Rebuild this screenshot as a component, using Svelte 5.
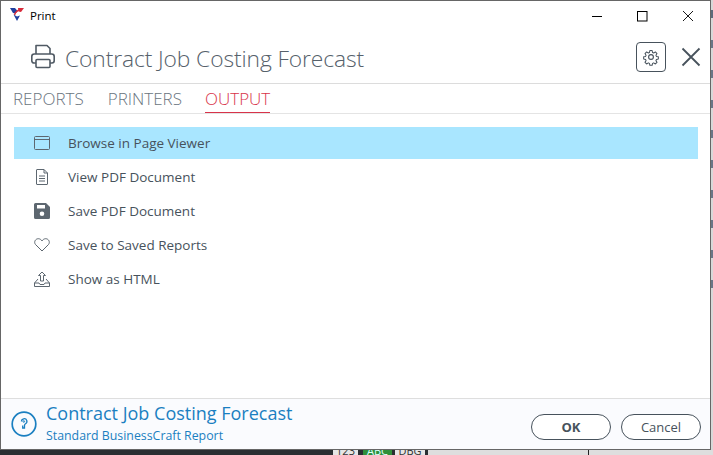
<script>
  const items = ['Browse in Page Viewer','View PDF Document','Save PDF Document','Save to Saved Reports','Show as HTML'];
  const tabs = ['REPORTS','PRINTERS','OUTPUT'];
</script>

<div class="screen">
  <div class="top-row">
    <main class="window">
      <div class="titlebar">
        <svg class="logo" width="14" height="13" viewBox="0 0 14 13">
          <path d="M0 0h5l2.500 3-2 2.500L3 5z" fill="#1f3f9f"/>
          <path d="M8 0h6l-3 4-2.500-.5z" fill="#d82a3a"/>
          <path d="M4.500 7C5.500 3.500 8 2 11 1.500" fill="none" stroke="#d82a3a" stroke-width="1.400"/>
          <path d="M3.500 6.500L7 13l3-5.500-3 1z" fill="#1f3f9f"/>
        </svg>
        <span class="wintitle">Print</span>
        <div class="winbtns">
          <svg width="12" height="12" viewBox="0 0 12 12"><path d="M0 6.500h10" stroke="#000" fill="none"/></svg>
          <svg width="12" height="12" viewBox="0 0 12 12"><rect x=".5" y="1.500" width="9.500" height="9.500" stroke="#000" fill="none"/></svg>
          <svg width="12" height="12" viewBox="0 0 12 12"><path d="M1 1l10 10M11 1L1 11" stroke="#000" fill="none" stroke-width=".9"/></svg>
        </div>
      </div>

      <header class="head">
        <svg class="printer" width="24" height="25" viewBox="0 0 24 25" fill="none" stroke="#505a64" stroke-width="1.600" stroke-linejoin="round">
          <path d="M5 10V1.500h11l3 3V10"/>
          <path d="M5 19H3a2.200 2.200 0 0 1-2.200-2.200v-4.300A2.500 2.500 0 0 1 3.300 10h17.400a2.500 2.500 0 0 1 2.500 2.500v4.300A2.200 2.200 0 0 1 21 19h-2"/>
          <rect x="5" y="15.500" width="14" height="8" rx="1"/>
        </svg>
        <h1>Contract Job Costing Forecast</h1>
        <button class="gear" aria-label="Settings">
          <svg width="18" height="18" viewBox="0 0 24 24" fill="none" stroke="#47525c" stroke-width="1.500" stroke-linejoin="round">
            <circle cx="12" cy="12" r="3.200"/>
            <path d="M10.300 2.500h3.400l.6 2.900 1.700.7 2.500-1.600 2.400 2.400-1.600 2.500.7 1.700 2.900.6v3.400l-2.900.6-.7 1.700 1.600 2.500-2.400 2.400-2.500-1.600-1.700.7-.6 2.900h-3.400l-.6-2.900-1.700-.7-2.500 1.600-2.400-2.400 1.600-2.500-.7-1.700-2.900-.6v-3.400l2.900-.6.7-1.700-1.600-2.500 2.400-2.400 2.500 1.600 1.700-.7z" transform="translate(1.200 1.200) scale(.9)"/>
          </svg>
        </button>
        <svg class="closex" width="20" height="20" viewBox="0 0 20 20"><path d="M1.500 1.500l17 17M18.500 1.500l-17 17" stroke="#47525c" stroke-width="1.800" fill="none"/></svg>
      </header>

      <nav class="tabs">
        {#each tabs as t, i}
          <span class="tab" class:active={i === 2}>{t}</span>
        {/each}
      </nav>

      <ul class="list">
        {#each items as it, i}
          <li class:sel={i === 0}>
            <span class="ico">
              {#if i === 0}
                <svg width="16" height="14" viewBox="0 0 16 14" fill="none" stroke="#5d6770" stroke-width="1"><rect x=".5" y=".5" width="15" height="13" rx="1"/><path d="M.5 3.500h15"/></svg>
              {:else if i === 1}
                <svg width="12" height="16" viewBox="0 0 12 16" fill="none" stroke="#5d6770" stroke-width="1"><path d="M.5 1a.5.5 0 0 1 .5-.5h7l3.500 3.500v11a.5.5 0 0 1-.5.5H1a.5.5 0 0 1-.5-.5z"/><path d="M8 .5V4h3.500M3 7h6M3 9.500h6M3 12h6"/></svg>
              {:else if i === 2}
                <svg width="16" height="16" viewBox="0 0 16 16"><path fill="#5d6770" fill-rule="evenodd" d="M1.500 0H12l4 4v10.500a1.500 1.500 0 0 1-1.500 1.500h-13A1.500 1.500 0 0 1 0 14.500v-13A1.500 1.500 0 0 1 1.500 0zM3 2v3.500h8V2zM8 8.500a2.300 2.300 0 1 0 0 4.600 2.300 2.300 0 0 0 0-4.600z"/></svg>
              {:else if i === 3}
                <svg width="16" height="14" viewBox="0 0 16 14" fill="none" stroke="#5d6770" stroke-width="1"><path d="M8 13L1.500 6.500C-.5 4 1.500.7 4.300.7 6 .7 7.300 1.800 8 3c.7-1.200 2-2.300 3.700-2.300 2.800 0 4.800 3.300 2.800 5.800z"/></svg>
              {:else}
                <svg width="16" height="16" viewBox="0 0 16 16" fill="none" stroke="#5d6770" stroke-width="1"><path d="M8 1L4.500 4.500H6.500V10H9.500V4.500H11.500z"/><path d="M4 8L.5 12v3.500h15V12L12 8M.5 12H5l1 1.500h4l1-1.500h4.500"/></svg>
              {/if}
            </span>
            <span class="label">{it}</span>
          </li>
        {/each}
      </ul>

      <footer class="foot">
        <svg class="help" width="26" height="26" viewBox="0 0 26 26" fill="none" stroke="#1a7fc1">
          <circle cx="13" cy="13" r="11.800" stroke-width="1.700"/>
          <path d="M10.500 10.500a2.700 2.700 0 1 1 4 2.300c-.9.500-1 1-1 1.700v2.500h-1.800v-2.500" stroke-width="1.300"/>
          <circle cx="12.800" cy="10.500" r=".8" stroke-width="1"/>
        </svg>
        <div class="foot-text">
          <div class="foot-title">Contract Job Costing Forecast</div>
          <div class="foot-sub">Standard BusinessCraft Report</div>
        </div>
        <div class="actions">
          <button class="btn ok">OK</button>
          <button class="btn">Cancel</button>
        </div>
      </footer>
    </main>
    <div class="edge"></div>
  </div>
  <div class="behind">
    <span class="b-dark"></span>
    <span class="chip c1">123</span>
    <span class="gap g1"></span>
    <span class="chip c2">ABC</span>
    <span class="gap g2"></span>
    <span class="chip c3">DBG</span>
    <span class="gap g2"></span>
    <span class="b-light"></span>
    <span class="b-line"></span>
    <span class="b-light rest"></span>
  </div>
</div>

<style>
  :global(body) { margin: 0; }
  .screen { width: 713px; height: 455px; overflow: hidden; display: flex; flex-direction: column; background: #fff; font-family: "Open Sans", "Noto Sans", sans-serif; }
  .top-row { display: flex; height: 450px; flex: none; }
  .window { width: 711px; box-sizing: border-box; border: 1px solid #666; background: #fff; display: flex; flex-direction: column; }
  .edge { flex: 1; background: linear-gradient(#5d6b7c, #5d6b7c) 0 10px / 100% 8px no-repeat, repeating-linear-gradient(#d8d8d8 0 22px, #6a7687 22px 30px) 0 18px / 100% 270px no-repeat, #d8d8d8; }
  .titlebar { height: 29px; flex: none; display: flex; align-items: center; padding-left: 9px; }
  .logo { margin-right: 6px; margin-top: -2px; }
  .wintitle { font-size: 11.500px; color: #000; }
  .winbtns { margin-left: auto; display: flex; gap: 33px; padding-right: 16px; }
  .head { height: 54px; flex: none; box-sizing: border-box; display: flex; align-items: center; padding: 0 9px 0 30px; border-bottom: 1px solid #dcdcdc; }
  h1 { font-weight: 300; font-size: 22.800px; margin: 3px 0 0 10px; color: #56616b; letter-spacing: -.1px; }
  .gear { margin: 1px 0 0 auto; width: 30px; height: 30px; border: 1px solid #47525c; border-radius: 4px; background: #fff; padding: 0; display: flex; align-items: center; justify-content: center; }
  .closex { margin: 0 0 0 15px; }
  .tabs { height: 30px; flex: none; box-sizing: border-box; border-bottom: 1px solid #e4e4e4; display: flex; gap: 24px; padding-left: 12px; }
  .tab { font-size: 17px; font-weight: 300; color: #6a7580; line-height: 29px; height: 29px; box-sizing: border-box; }
  .tab:nth-child(3) { margin-left: -1px; }
  .tab.active { color: #d8334a; border-bottom: 1px solid #d8334a; }
  .list { list-style: none; margin: 13px 12px 0 13px; padding: 0; flex: 1; display: flex; flex-direction: column; gap: 2px; }
  li { height: 32px; display: flex; align-items: center; padding-left: 20px; }
  li.sel { background: #a9e6ff; }
  .ico { width: 16px; display: flex; justify-content: center; margin-right: 18px; }
  .label { font-size: 13.500px; color: #47525c; font-weight: 400; }
  .foot { height: 51px; flex: none; box-sizing: border-box; border-top: 1px solid #dedede; background: #fafbfe; display: flex; align-items: center; padding: 0 9px 0 10px; }
  .foot-text { margin: -3px 0 0 9px; }
  .foot-title { font-size: 18px; color: #1a7fc1; line-height: 24px; }
  .foot-sub { font-size: 12.350px; color: #1a7fc1; line-height: 17px; margin-top: 2px; }
  .actions { margin-left: auto; display: flex; gap: 10px; margin-top: 6px; }
  .btn { width: 80px; height: 26px; box-sizing: border-box; border: 1px solid #47525c; border-radius: 13px; background: #fff; font: 400 13px "Open Sans", sans-serif; color: #47525c; padding: 0; }
  .btn.ok { font-weight: 700; }
  .behind { flex: 1; display: flex; background: #2a2f33; overflow: hidden; }
  .b-dark { width: 333px; }
  .chip { height: 5px; background: #e6e6e6; color: #333; font-size: 11px; line-height: 1px; text-align: center; overflow: hidden; white-space: nowrap; }
  .c1 { width: 25px; }
  .c2 { width: 29px; background: #2f8f3a; color: #dff; }
  .c3 { width: 30px; }
  .g1 { width: 5px; }
  .g2 { width: 3px; }
  .b-light { width: 160px; background: #dedede; }
  .b-line { width: 1px; background: #222; }
  .b-light.rest { flex: 1; }
</style>
